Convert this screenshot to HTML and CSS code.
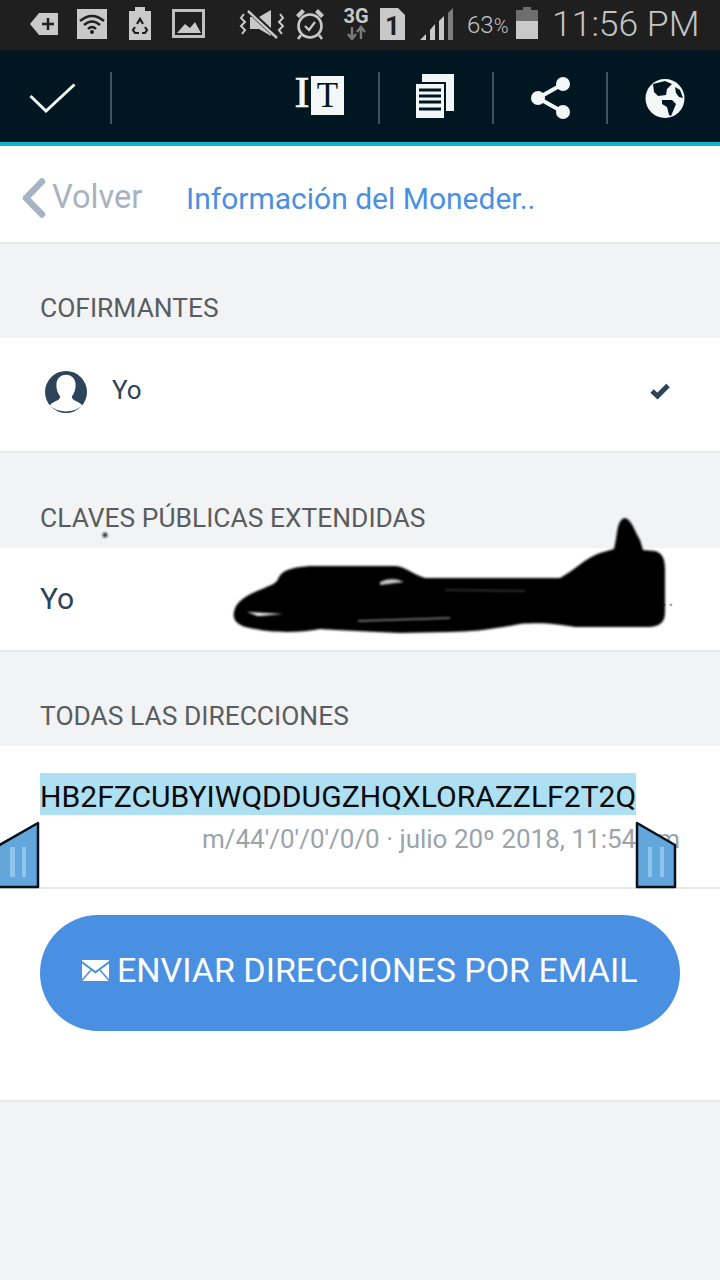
FILE: index.html
```html
<!DOCTYPE html>
<html lang="es">
<head>
<meta charset="utf-8">
<title>Información del Monedero</title>
<link rel="stylesheet" href="styles.css">
</head>
<body>
<div class="statusbar">
  <svg class="si s-tag" width="28" height="22" viewBox="0 0 28 22"><path d="M9 0H28V22H9L0 11Z" fill="#c9c9c9"/><path d="M12 11H24M18 5V17" stroke="#1f1f1f" stroke-width="2.6"/></svg>
  <svg class="si s-wifi" width="30" height="30" viewBox="0 0 30 30"><rect width="30" height="30" fill="#c9c9c9"/><g fill="none" stroke="#1f1f1f" stroke-width="2.4"><path d="M3 12Q15 2 27 12"/><path d="M7 16Q15 9 23 16"/><path d="M11 20Q15 16 19 20"/></g><circle cx="15" cy="23" r="2" fill="#1f1f1f"/></svg>
  <svg class="si s-recycle" width="22" height="33" viewBox="0 0 22 33"><path d="M0 4H6V0H16V4H22V33H0Z" fill="#c9c9c9"/><g fill="none" stroke="#1f1f1f" stroke-width="2.2"><path d="M8 17L11 12L14 17"/><path d="M6 20L4 23L6 26H10"/><path d="M16 20L18 23L16 26H13"/></g></svg>
  <svg class="si s-pic" width="33" height="29" viewBox="0 0 33 29"><rect x="1.5" y="1.5" width="30" height="26" fill="none" stroke="#c0c0c0" stroke-width="3"/><path d="M5 24L13 15L18 19L23 13L29 24Z" fill="#c9c9c9"/></svg>
  <svg class="si s-mute" width="46" height="30" viewBox="0 0 46 30"><path d="M11 8H20L32 1V27L20 20H11Z" fill="#c9c9c9"/><path d="M9 1L38 28" stroke="#1f1f1f" stroke-width="5"/><path d="M9 2L38 29" stroke="#c9c9c9" stroke-width="2.4"/><g fill="none" stroke="#c9c9c9" stroke-width="2"><path d="M5 5L2 9L6 13L2 17L6 21L3 25"/><path d="M41 5L44 9L40 13L44 17L40 21L43 25"/></g></svg>
  <svg class="si s-alarm" width="30" height="32" viewBox="0 0 30 32"><circle cx="15" cy="18" r="11.5" fill="none" stroke="#c9c9c9" stroke-width="2.6"/><path d="M10 18L14 22L20 14" fill="none" stroke="#c9c9c9" stroke-width="2.2"/><path d="M1 7L7 1L10 4L4 10ZM29 7L23 1L20 4L26 10Z" fill="#c9c9c9"/><path d="M6 27L3 31M24 27L27 31" stroke="#c9c9c9" stroke-width="2.6"/></svg>
  <svg class="si s-3g" width="30" height="32" viewBox="0 0 30 32"><text x="15" y="15" text-anchor="middle" class="t3g">3G</text><path d="M11 19V30M7 26L11 31L15 26M20 31V20M16 24L20 19L24 24" fill="none" stroke="#7a7a7a" stroke-width="2.4"/></svg>
  <svg class="si s-sim" width="25" height="32" viewBox="0 0 25 32"><path d="M0 0H18L25 7V32H0Z" fill="#c9c9c9"/><text x="12.5" y="27" text-anchor="middle" class="tsim">1</text></svg>
  <svg class="si s-signal" width="33" height="32" viewBox="0 0 33 32"><path d="M0 32L6 26V32Z" fill="#c9c9c9"/><path d="M10 22L15 16V32H10Z" fill="#c9c9c9"/><path d="M19 13L24 8V32H19Z" fill="#c9c9c9"/><path d="M28 5L33 0V32H28Z" fill="#7d7d7d"/></svg>
  <span class="pct">63<small>%</small></span>
  <svg class="si s-batt" width="22" height="32" viewBox="0 0 22 32"><path d="M7 0H15V3H22V32H0V3H7Z" fill="#6e6e6e"/><rect y="14" width="22" height="18" fill="#c9c9c9"/></svg>
  <span class="clock">11:56 PM</span>
</div>

<div class="actionbar">
  <svg class="ai a-check" width="47" height="30" viewBox="0 0 47 30"><path d="M1.5 13L17 28L45.5 1.5" fill="none" stroke="#f4f7f8" stroke-width="3"/></svg>
  <span class="divider d1"></span>
  <svg class="ai a-font" width="51" height="39" viewBox="0 0 51 39"><rect x="18" width="33" height="39" fill="#f4f7f8"/><text x="34.5" y="31" text-anchor="middle" class="tT">T</text><text x="9" y="31" text-anchor="middle" class="tI">I</text></svg>
  <span class="divider d2"></span>
  <svg class="ai a-docs" width="38" height="44" viewBox="0 0 38 44"><path d="M6 0H38V37H30V8H6Z" fill="#f4f7f8"/><rect y="10" width="28" height="34" fill="#f4f7f8"/><path d="M3 16H25M3 22H25M3 28H25M3 35H25" stroke="#001722" stroke-width="3"/></svg>
  <span class="divider d3"></span>
  <svg class="ai a-share" width="39" height="42" viewBox="0 0 39 42"><path d="M32 7L7 21L32 35" fill="none" stroke="#f4f7f8" stroke-width="4"/><circle cx="32" cy="7" r="7" fill="#f4f7f8"/><circle cx="7" cy="21" r="7" fill="#f4f7f8"/><circle cx="32" cy="35" r="7" fill="#f4f7f8"/></svg>
  <span class="divider d4"></span>
  <svg class="ai a-globe" width="40" height="39" viewBox="0 0 40 39"><circle cx="20" cy="19.5" r="19.5" fill="#f4f7f8"/><path d="M8 5L20 2L27 5L22 10L21 16L13 17L9 13Z" fill="#001722"/><path d="M17 21L27 21L31 25L26 37L24 36L22 28L17 25Z" fill="#001722"/><path d="M30 8L35 11L38 19L34 18L31 14Z" fill="#001722"/></svg>
</div>

<header class="nav">
  <a class="back">
    <svg class="chev" width="24" height="40" viewBox="0 0 24 40"><path d="M20 3.5L4 20L20 36.5" fill="none" stroke="#a5b3c2" stroke-width="6.5" stroke-linecap="round" stroke-linejoin="round"/></svg>
    <span class="back-text">Volver</span>
  </a>
  <h1 class="title">Información del Moneder..</h1>
</header>

<h2 class="label">COFIRMANTES</h2>
<section class="row row-copayer">
  <svg class="avatar" width="42" height="42" viewBox="0 0 44 44"><circle cx="22" cy="22" r="22" fill="#2c4359"/><path d="M5 36C9 31 15 32 16 27C13 23 11.500 18 12 13C13 7 17 4 22 4C27 4 31 7 32 13C32.500 18 31 23 28 27C29 32 35 31 39 36C35 40.500 28 42.500 22 42.500C16 42.500 9 40.500 5 36Z" fill="#fff"/></svg>
  <span class="yo">Yo</span>
  <svg class="tick" width="22" height="18" viewBox="0 0 22 18"><path d="M3 9L8.500 14L19 3.500" fill="none" stroke="#2c4359" stroke-width="5"/></svg>
</section>

<h2 class="label label-tall">CLAVES PÚBLICAS EXTENDIDAS</h2>
<section class="row row-key">
  <span class="yo2">Yo</span>
  <span class="dots">..</span>
</section>

<h2 class="label">TODAS LAS DIRECCIONES</h2>
<section class="row row-addr">
  <div class="addr"><span class="sel">HB2FZCUBYIWQDDUGZHQXLORAZZLF2T2Q</span></div>
  <div class="meta">m/44'/0'/0'/0/0 · julio 20º 2018, 11:54 pm</div>
</section>

<section class="row row-btn">
  <button class="send"><svg class="mail" width="27" height="21" viewBox="0 0 27 21"><path d="M0 0H27V1L13.500 11L0 1Z" fill="#fff"/><path d="M0 3.500L13.500 13.500L27 3.500V21H0Z" fill="#fff"/><path d="M0 20.500L9 10M27 20.500L18 10" stroke="#4a90e2" stroke-width="1.500"/></svg> ENVIAR DIRECCIONES POR EMAIL</button>
</section>

<svg class="scribble" width="720" height="1280" viewBox="0 0 720 1280">
  <path d="M234 612C236 600 250 594 262 589C270 585 276 585 279 577C283 569 296 567 310 566L394 566C405 566 412 574 425 578L560 578C575 570 585 558 600 553L614 549C618 535 616 520 625 518C632 520 634 530 640 540L643 550L655 551C663 553 665 560 665 570L665 612C665 622 660 626 650 627L575 627C560 625 545 622 520 624C490 630 470 632 450 632L400 633C370 632 340 630 320 629C300 633 270 633 250 628C238 626 232 620 234 612Z" fill="#000"/>
  <path d="M247 612L283 614L258 616Z" fill="#fff"/>
  <path d="M380 582Q392 576 404 582L380 585Z" fill="#c8c8c8"/>
  <path d="M358 621L450 618" stroke="#8a8a8a" stroke-width="1.500"/>
  <path d="M445 590L525 591" stroke="#555" stroke-width="1"/>
  <circle cx="105" cy="535" r="2.500" fill="#333"/>
</svg>
<svg class="handle handle-l" width="40" height="68" viewBox="0 0 40 68"><path d="M38 2V66H-4V26Z" fill="#62a6db" stroke="#05101a" stroke-width="2.500" stroke-linejoin="round"/><path d="M10 26H15V56H10ZM22 26H26V56H22Z" fill="#8fc4ec"/></svg>
<svg class="handle handle-r" width="42" height="68" viewBox="0 0 42 68"><path d="M2 2L40 24V66H2Z" fill="#62a6db" stroke="#05101a" stroke-width="2.500" stroke-linejoin="round"/><path d="M13 26H17V56H13ZM25 26H29V56H25Z" fill="#8fc4ec"/></svg>
</body>
</html>
```
FILE: styles.css
```css
* { box-sizing: border-box; margin: 0; padding: 0; }
html, body { width: 720px; height: 1280px; overflow: hidden; }
body { position: relative; background: #f2f3f5; font-family: Roboto, "Liberation Sans", sans-serif; color: #2c4359; }

.statusbar { height: 50px; background: #1f1f1f; display: flex; align-items: flex-start; color: #c4c4c4; }
.si { flex: none; display: block; }
.s-tag { margin: 13px 0 0 30px; }
.s-wifi { margin: 9px 0 0 19px; }
.s-recycle { margin: 7px 0 0 22px; }
.s-pic { margin: 9px 0 0 21px; }
.s-mute { margin: 9px 0 0 34px; }
.s-alarm { margin: 8px 0 0 10px; }
.s-3g { margin: 8px 0 0 16px; }
.s-sim { margin: 8px 0 0 9px; }
.s-signal { margin: 8px 0 0 15px; }
.t3g { font: 700 20px Roboto, sans-serif; fill: #c9c9c9; }
.tsim { font: 700 26px Roboto, sans-serif; fill: #1f1f1f; }
.pct { margin-left: 14px; width: 42px; font-size: 24px; font-weight: 300; line-height: 50px; white-space: nowrap; }
.pct small { font-size: 20px; }
.s-batt { margin: 7px 0 0 7px; }
.clock { margin-left: 14px; font-size: 35.500px; font-weight: 300; line-height: 48px; white-space: nowrap; }

.actionbar { height: 96px; background: #001722; border-bottom: 4px solid #0fb0cc; display: flex; align-items: flex-start; }
.ai { flex: none; display: block; }
.divider { flex: none; width: 2px; height: 52px; margin-top: 22px; background: #3c5562; }
.a-check { margin: 33px 0 0 29px; }
.d1 { margin-left: 34px; }
.a-font { margin: 26px 0 0 181px; }
.d2 { margin-left: 34px; }
.a-docs { margin: 24px 0 0 36px; }
.d3 { margin-left: 38px; }
.a-share { margin: 27px 0 0 37px; }
.d4 { margin-left: 36px; }
.a-globe { margin: 29px 0 0 37px; }
.tT { font: 400 35px "Liberation Serif", serif; fill: #001722; }
.tI { font: 400 45px "Liberation Serif", serif; fill: #f4f7f8; stroke: #f4f7f8; stroke-width: .7px; }

.nav { height: 98px; padding-top: 8px; background: #fff; border-bottom: 2px solid #e8e9eb; display: flex; align-items: center; }
.back { display: flex; align-items: center; width: 186px; padding-left: 22px; color: #a9b2bf; font-size: 32.600px; }
.back-text { padding-bottom: 3px; }
.chev { margin-right: 6px; }
.title { font-size: 30px; font-weight: 400; color: #4a90e2; white-space: nowrap; }

.label { height: 94px; padding: 0 40px 14px; display: flex; align-items: flex-end; font-size: 26.400px; font-weight: 400; color: #5a5d60; line-height: 32px; white-space: nowrap; }
.label-tall { height: 95px; }

.row { background: #fff; border-bottom: 2px solid #e8e9eb; display: flex; }
.row-copayer { height: 115px; align-items: center; padding: 0 49px 0 45px; }
.avatar { flex: none; margin-bottom: 5px; }
.yo { margin-left: 25px; padding-bottom: 10px; font-size: 26px; flex: 1; }
.tick { flex: none; margin-bottom: 7px; }
.row-key { height: 104px; align-items: center; justify-content: space-between; padding: 0 46px 2px 40px; }
.yo2 { font-size: 30px; }
.dots { font-size: 24px; color: #9aa4ac; }
.row-addr { height: 143px; flex-direction: column; padding: 27px 40px 0; align-items: stretch; }
.addr { height: 42px; }
.sel { display: inline-block; height: 42px; line-height: 48px; background: #aee0f3; color: #0b0b0b; font-size: 30.100px; white-space: nowrap; }
.meta { margin-top: 6px; text-align: right; color: #9aa4ac; font-size: 26px; line-height: 36px; white-space: nowrap; }
.row-btn { height: 213px; padding: 26px 40px 0; align-items: flex-start; }
.send { width: 640px; height: 116px; padding: 0 0 6px 42px; border: 0; border-radius: 58px; background: #4a90e2; color: #fff; font-family: inherit; font-size: 34px; white-space: nowrap; display: flex; align-items: center; gap: 8px; }
.mail { flex: none; }

.scribble { position: absolute; left: 0; top: 0; pointer-events: none; filter: blur(.8px); }
.handle { position: absolute; top: 821px; overflow: visible; }
.handle-l { left: 0; }
.handle-r { left: 635px; }
```
